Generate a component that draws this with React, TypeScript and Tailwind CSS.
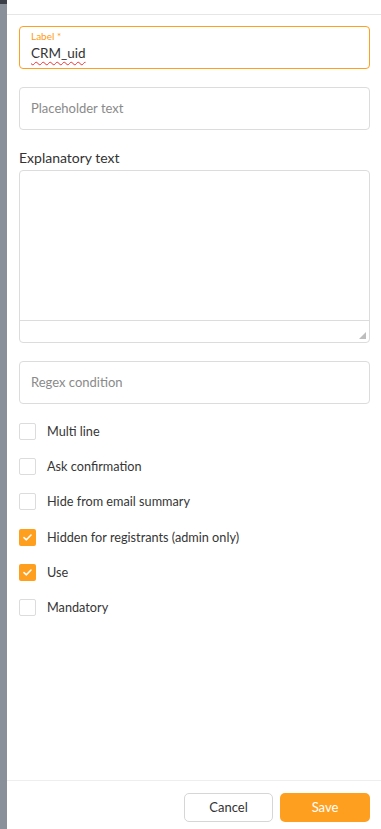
import React from "react";

const font = { fontFamily: 'Lato, "Noto Sans", sans-serif' };

function Check({ checked, label }: { checked?: boolean; label: string }) {
  return (
    <div className="flex items-center h-[35.2px]">
      {checked ? (
        <div className="w-[17px] h-[17px] rounded-[2px] bg-[#ff9f1f] flex items-center justify-center">
          <svg width="9" height="7" viewBox="0 0 9 7" fill="none">
            <path d="M1 3.6 L3.4 5.8 L8 1" stroke="white" strokeWidth="1.6" strokeLinecap="round" strokeLinejoin="round" />
          </svg>
        </div>
      ) : (
        <div className="w-[17px] h-[17px] rounded-[2px] border border-[#dcdcdc] bg-white" />
      )}
      <span className="ml-[11px] text-[12.7px] text-[#363636]">{label}</span>
    </div>
  );
}

export default function App() {
  return (
    <div className="w-[381px] h-[829px] flex bg-white" style={font}>
      <div className="w-[7px] flex flex-col">
        <div className="h-[4px] bg-[#3b4048]" />
        <div className="flex-1 bg-[#8a9099]" />
      </div>
      <div className="flex-1 flex flex-col">
        <div className="h-[15px] border-b border-[#e6e6e6] shrink-0" />
        <div className="flex-1 pl-[12px] pr-[11px] pt-[11px] flex flex-col">
          <div className="h-[43px] border border-[#ff9f1f] rounded-[4px] px-[11px] pt-[3px]">
            <div className="text-[10px] leading-[13px] text-[#ff9a0e]">Label *</div>
            <div className="text-[13.5px] leading-[20px] text-[#333] underline decoration-wavy decoration-[#e33] decoration-[1px] underline-offset-[3px]">CRM_uid</div>
          </div>
          <div className="mt-[18px] h-[43px] border border-[#dcdcdc] rounded-[4px] px-[11px] flex items-center">
            <span className="text-[13px] text-[#8a8a8a]">Placeholder text</span>
          </div>
          <div className="mt-[19px] text-[14px] leading-[18px] text-[#333]">Explanatory text</div>
          <div className="mt-[3px] h-[173px] border border-[#dcdcdc] rounded-[4px] flex flex-col">
            <div className="flex-1" />
            <div className="h-[22px] border-t border-[#dcdcdc] relative">
              <svg className="absolute right-[3px] bottom-[3px]" width="7" height="7" viewBox="0 0 7 7">
                <path d="M7 0 L7 7 L0 7 Z" fill="#bdbdbd" />
              </svg>
            </div>
          </div>
          <div className="mt-[18px] h-[43px] border border-[#dcdcdc] rounded-[4px] px-[11px] flex items-center">
            <span className="text-[13px] text-[#8a8a8a]">Regex condition</span>
          </div>
          <div className="mt-[10px] flex flex-col">
            <Check label="Multi line" />
            <Check label="Ask confirmation" />
            <Check label="Hide from email summary" />
            <Check checked label="Hidden for registrants (admin only)" />
            <Check checked label="Use" />
            <Check label="Mandatory" />
          </div>
        </div>
        <div className="border-t border-[#eeeeee] h-[49px] shrink-0 flex justify-end items-start pt-[12px] pr-[11px] gap-[7px]">
          <button className="w-[89px] h-[29px] border border-[#d6d6d6] rounded-[5px] bg-white text-[13px] text-[#333]">Cancel</button>
          <button className="w-[90px] h-[29px] rounded-[5px] bg-[#ff9f1f] text-[13px] text-white">Save</button>
        </div>
      </div>
    </div>
  );
}
